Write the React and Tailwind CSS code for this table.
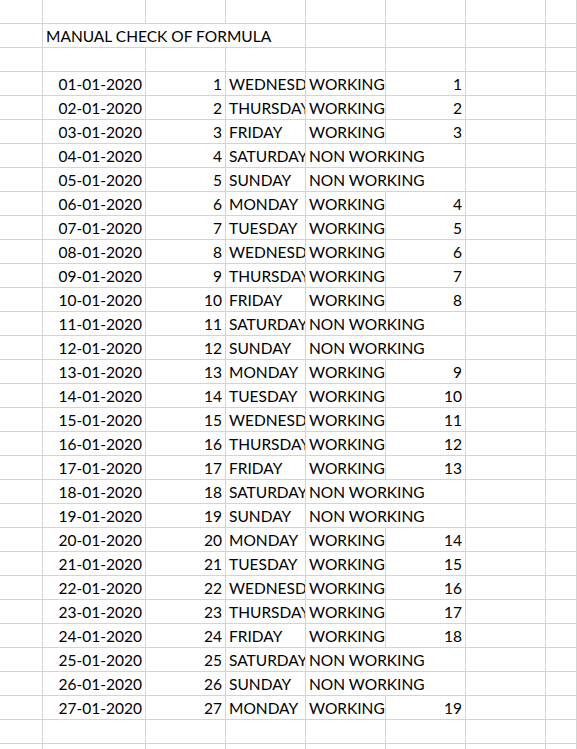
import React from 'react';

const DAYS = ['WEDNESDAY', 'THURSDAY', 'FRIDAY', 'SATURDAY', 'SUNDAY', 'MONDAY', 'TUESDAY'];

// build the 27 rows of the manual check
const buildRows = () => {
  const rows = [];
  let count = 0;
  for (let i = 1; i <= 27; i++) {
    const day = DAYS[(i - 1) % 7];
    const weekend = day === 'SATURDAY' || day === 'SUNDAY';
    if (!weekend) count++;
    rows.push({
      date: `${String(i).padStart(2, '0')}-01-2020`,
      n: i,
      day,
      weekend,
      count: weekend ? null : count,
    });
  }
  return rows;
};

const cell = 'h-6 border-r border-b border-[#d4d4d4] overflow-hidden whitespace-nowrap flex items-end pb-[3px] px-[3px]';

function EmptyRow() {
  return (
    <div className="flex">
      <div className={`${cell} w-[43px]`}></div>
      <div className={`${cell} w-[103px]`}></div>
      <div className={`${cell} w-[80px]`}></div>
      <div className={`${cell} w-[80px]`}></div>
      <div className={`${cell} w-[80px]`}></div>
      <div className={`${cell} w-[80px]`}></div>
      <div className={`${cell} w-[80px]`}></div>
      <div className={`${cell} flex-1`}></div>
    </div>
  );
}

function App() {
  const rows = buildRows();

  return (
    <div className="min-h-screen w-[577px] overflow-hidden bg-white text-black text-[15.5px] leading-none" style={{ fontFamily: 'Lato, sans-serif' }}>
      <EmptyRow />

      {/* Title row */}
      <div className="flex">
        <div className={`${cell} w-[43px]`}></div>
        <div className={`${cell} w-[263px]`}>
          <span>MANUAL CHECK OF FORMULA</span>
        </div>
        <div className={`${cell} w-[80px]`}></div>
        <div className={`${cell} w-[80px]`}></div>
        <div className={`${cell} w-[80px]`}></div>
        <div className={`${cell} flex-1`}></div>
      </div>

      <EmptyRow />

      {rows.map((r) => (
        <div key={r.n} className="flex">
          <div className={`${cell} w-[43px]`}></div>
          <div className={`${cell} w-[103px] justify-end`}>{r.date}</div>
          <div className={`${cell} w-[80px] justify-end`}>{r.n}</div>
          <div className={`${cell} w-[80px]`}>{r.day}</div>
          {r.weekend ? (
            <div className={`${cell} w-[160px]`}>NON WORKING</div>
          ) : (
            <>
              <div className={`${cell} w-[80px]`}>WORKING</div>
              <div className={`${cell} w-[80px] justify-end`}>{r.count}</div>
            </>
          )}
          <div className={`${cell} w-[80px]`}></div>
          <div className={`${cell} flex-1`}></div>
        </div>
      ))}

      <EmptyRow />
      <EmptyRow />
    </div>
  );
}

export default App;
